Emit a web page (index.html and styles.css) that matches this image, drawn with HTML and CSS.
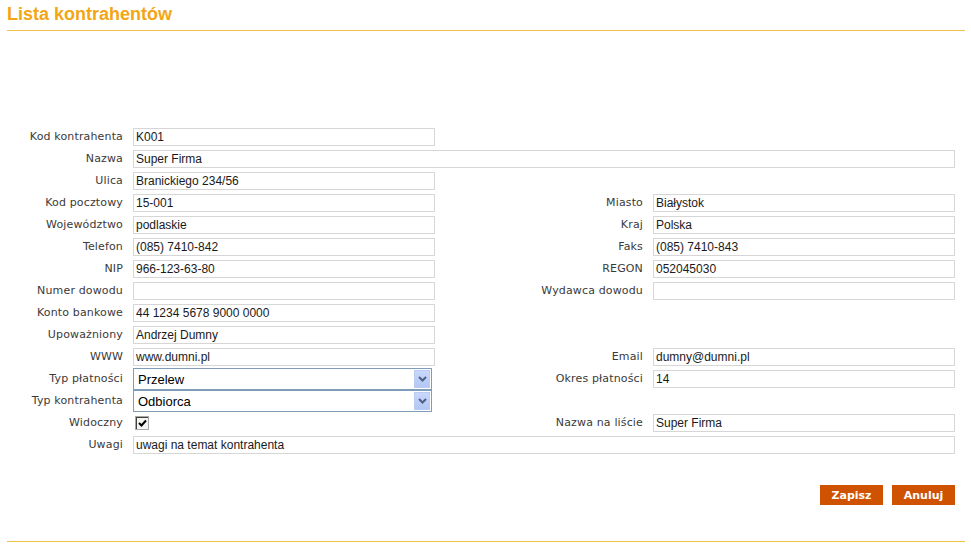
FILE: index.html
```html
<!DOCTYPE html>
<html lang="pl">
<head>
<meta charset="utf-8">
<title>Lista kontrahentów</title>
<link rel="stylesheet" href="styles.css">
</head>
<body>
<div class="page">
  <h1 class="title">Lista kontrahentów</h1>
  <div class="form">
    <label class="lbl">Kod kontrahenta</label><div class="inp">K001</div><span></span><span></span>
    <label class="lbl">Nazwa</label><div class="inp wide">Super Firma</div>
    <label class="lbl">Ulica</label><div class="inp">Branickiego 234/56</div><span></span><span></span>
    <label class="lbl">Kod pocztowy</label><div class="inp">15-001</div><label class="lbl">Miasto</label><div class="inp">Białystok</div>
    <label class="lbl">Województwo</label><div class="inp">podlaskie</div><label class="lbl">Kraj</label><div class="inp">Polska</div>
    <label class="lbl">Telefon</label><div class="inp">(085) 7410-842</div><label class="lbl">Faks</label><div class="inp">(085) 7410-843</div>
    <label class="lbl">NIP</label><div class="inp">966-123-63-80</div><label class="lbl">REGON</label><div class="inp">052045030</div>
    <label class="lbl">Numer dowodu</label><div class="inp"></div><label class="lbl">Wydawca dowodu</label><div class="inp"></div>
    <label class="lbl">Konto bankowe</label><div class="inp">44 1234 5678 9000 0000</div><span></span><span></span>
    <label class="lbl">Upoważniony</label><div class="inp">Andrzej Dumny</div><span></span><span></span>
    <label class="lbl">WWW</label><div class="inp">www.dumni.pl</div><label class="lbl">Email</label><div class="inp">dumny@dumni.pl</div>
    <label class="lbl">Typ płatności</label><div class="sel"><span class="sel-text">Przelew</span><span class="sel-btn"><svg width="9" height="6" viewBox="0 0 9 6"><path d="M1 1 L4.5 4.5 L8 1" fill="none" stroke="#4d6185" stroke-width="2"/></svg></span></div><label class="lbl">Okres płatności</label><div class="inp">14</div>
    <label class="lbl">Typ kontrahenta</label><div class="sel"><span class="sel-text">Odbiorca</span><span class="sel-btn"><svg width="9" height="6" viewBox="0 0 9 6"><path d="M1 1 L4.5 4.5 L8 1" fill="none" stroke="#4d6185" stroke-width="2"/></svg></span></div><span></span><span></span>
    <label class="lbl">Widoczny</label><div class="chkcell"><span class="chk"><svg width="9" height="9" viewBox="0 0 9 9"><path d="M1 4 L3.5 6.5 L8 1.5" fill="none" stroke="#000" stroke-width="2"/></svg></span></div><label class="lbl">Nazwa na liście</label><div class="inp">Super Firma</div>
    <label class="lbl">Uwagi</label><div class="inp wide">uwagi na temat kontrahenta</div>
  </div>
  <div class="actions">
    <button class="btn">Zapisz</button>
    <button class="btn">Anuluj</button>
  </div>
  <div class="footer-line"></div>
</div>
</body>
</html>
```
FILE: styles.css
```css
html, body {
  margin: 0;
  padding: 0;
  background: #ffffff;
}
.page {
  width: 958px;
  padding: 0 0 0 7px;
}
.title {
  margin: 0;
  padding-top: 4px;
  height: 26px;
  font-family: "Liberation Sans", Arial, sans-serif;
  font-size: 18px;
  font-weight: bold;
  color: #f3a613;
  line-height: 20px;
  border-bottom: 1px solid #f0c24a;
  box-sizing: content-box;
}
.form {
  display: grid;
  grid-template-columns: 116px 302px 198px 302px;
  column-gap: 10px;
  row-gap: 4px;
  grid-auto-rows: 18px;
  margin-top: 97px;
  font-family: "DejaVu Sans", Verdana, sans-serif;
}
.lbl {
  font-size: 11px;
  letter-spacing: 0.15px;
  color: #3a3a3a;
  text-align: right;
  line-height: 18px;
  white-space: nowrap;
}
.inp {
  box-sizing: border-box;
  height: 18px;
  border: 1px solid #d6d6d6;
  background: #fff;
  font-family: "Liberation Sans", Arial, sans-serif;
  font-size: 12px;
  color: #1a1a1a;
  line-height: 16px;
  padding: 0 2px;
  white-space: nowrap;
  overflow: hidden;
}
.wide {
  grid-column: 2 / 5;
}
.sel {
  box-sizing: border-box;
  width: 299px;
  height: 22px;
  margin-top: -2px;
  border: 1px solid #7f9db9;
  background: #fff;
  display: flex;
  align-items: center;
  justify-content: space-between;
  padding: 1px;
}
.sel-text {
  font-family: "Liberation Sans", Arial, sans-serif;
  font-size: 13px;
  color: #000;
  padding-left: 3px;
}
.sel-btn {
  width: 16px;
  height: 18px;
  background: linear-gradient(#c9d8fc, #b2c7f5);
  border: 1px solid #bccbf0;
  box-sizing: border-box;
  display: flex;
  align-items: center;
  justify-content: center;
}
.chkcell {
  display: flex;
  align-items: center;
  padding-left: 2px;
}
.chk {
  box-sizing: border-box;
  width: 14px;
  height: 14px;
  border: 1px solid #a8a8a8;
  background: #f4f4f0;
  display: flex;
  align-items: center;
  justify-content: center;
  box-shadow: inset 1px 1px 0 #404040;
}
.actions {
  display: flex;
  justify-content: flex-end;
  gap: 9px;
  margin-top: 31px;
  padding-right: 10px;
}
.btn {
  width: 63px;
  height: 20px;
  border: none;
  background: #cf5200;
  color: #fff;
  font-family: "DejaVu Sans", Verdana, sans-serif;
  font-size: 11px;
  font-weight: bold;
  padding: 0;
  cursor: pointer;
}
.footer-line {
  margin-top: 36px;
  height: 1px;
  background: #f0c24a;
}
```
